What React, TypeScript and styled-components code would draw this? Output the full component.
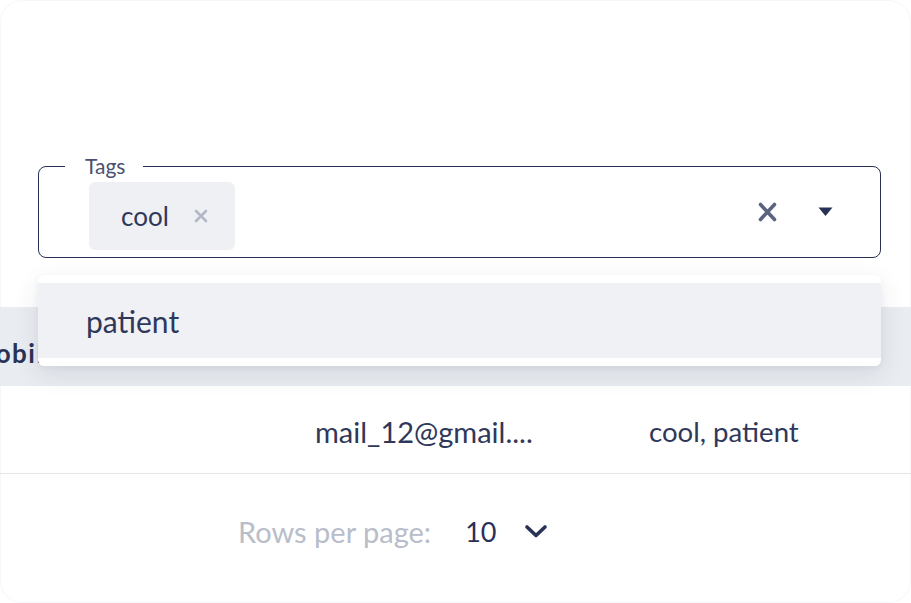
import React from 'react';
import styled, { createGlobalStyle } from 'styled-components';

const GlobalStyle = createGlobalStyle`
  html, body {
    margin: 0;
    padding: 0;
    background: #ffffff;
  }
  body {
    font-family: 'Lato', 'Noto Sans', sans-serif;
    color: #283256;
    -webkit-font-smoothing: antialiased;
  }
`;

const Page = styled.div`
  width: 911px;
  height: 603px;
  overflow: hidden;
  background: #ffffff;
  border-radius: 22px;
  box-shadow: inset 0 0 0 1px #f6f7f9;
  padding-top: 166px;
  box-sizing: border-box;
`;

const FieldWrap = styled.div`
  position: relative;
  margin: 0 30px 0 38px;
  z-index: 2;
`;

const Fieldset = styled.fieldset`
  margin: -11px 0 0;
  height: 103px;
  box-sizing: border-box;
  border: 1.5px solid #283256;
  border-radius: 8px;
  padding: 0 47px 0 50px;
  display: flex;
  align-items: center;
  gap: 14px;
`;

const Legend = styled.legend`
  font-size: 21px;
  color: #4a5170;
  padding: 0 18px 0 20px;
  margin-left: -24px;
  line-height: 22px;
`;

const Chip = styled.div`
  display: flex;
  align-items: center;
  gap: 25px;
  height: 68px;
  margin-top: -3px;
  padding: 0 27px 0 32px;
  background: #eff0f4;
  border-radius: 6px;
  font-size: 26px;
  color: #2f3859;
`;

const Spacer = styled.div`
  flex: 1;
`;

const IconButton = styled.button<{ $w: number; $gap?: number }>`
  display: flex;
  align-items: center;
  justify-content: center;
  border: 0;
  background: none;
  padding: 0;
  width: ${({ $w }) => $w}px;
  height: 30px;
  margin-top: -11px;
  margin-left: ${({ $gap }) => $gap ?? 0}px;
  cursor: pointer;
`;

const Menu = styled.ul`
  position: absolute;
  left: 0;
  right: 0;
  top: calc(100% + 17px);
  list-style: none;
  margin: 0;
  padding: 8px 0;
  background: #ffffff;
  border-radius: 6px;
  box-shadow: 0 8px 26px rgba(40, 50, 86, 0.1), 0 2px 6px rgba(40, 50, 86, 0.05);
`;

const Option = styled.li<{ $active?: boolean }>`
  height: 75px;
  display: flex;
  align-items: center;
  padding-left: 48px;
  font-size: 30px;
  color: #2f3859;
  background: ${({ $active }) => ($active ? '#f0f1f5' : 'transparent')};
`;

const Table = styled.div`
  margin-top: 49px;
`;

const HeaderRow = styled.div`
  height: 79px;
  background: #e9ecf0;
  display: flex;
  align-items: center;
  overflow: hidden;
`;

const HeaderCell = styled.div`
  font-size: 26px;
  font-weight: 700;
  letter-spacing: 1.5px;
  color: #283256;
  margin-left: -30px;
  padding-top: 12px;
`;

const DataRow = styled.div`
  height: 88px;
  display: grid;
  grid-template-columns: 315px 334px 1fr;
  align-items: center;
  border-bottom: 1.5px solid #e2e5ea;
  box-sizing: border-box;
`;

const Cell = styled.div<{ $size: number }>`
  font-size: ${({ $size }) => $size}px;
  color: #2f3859;
  padding-top: 4px;
`;

const Pagination = styled.div`
  height: 114px;
  display: flex;
  align-items: center;
  padding-left: 238px;
`;

const PagerLabel = styled.span`
  font-size: 29px;
  color: #b8bdca;
  margin-right: 34px;
`;

const PagerValue = styled.span`
  font-size: 27px;
  color: #283256;
  margin-right: 28px;
`;

const App: React.FC = () => {
  return (
    <>
      <GlobalStyle />
      <Page>
        <FieldWrap>
          <Fieldset>
            <Legend>Tags</Legend>
            <Chip>
              cool
              <svg width="14" height="14" viewBox="0 0 14 14">
                <path d="M2 2 L12 12 M12 2 L2 12" stroke="#b3b8c5" strokeWidth="2.6" strokeLinecap="round" />
              </svg>
            </Chip>
            <Spacer />
            <IconButton $w={20} aria-label="Clear">
              <svg width="19" height="20" viewBox="0 0 19 20">
                <path d="M2.5 2.5 L16.5 17.5 M16.5 2.5 L2.5 17.5" stroke="#5c6380" strokeWidth="3.6" strokeLinecap="round" />
              </svg>
            </IconButton>
            <IconButton $w={16} $gap={26} aria-label="Open">
              <svg width="15" height="10" viewBox="0 0 15 10">
                <path d="M0.5 0.5 L14.5 0.5 L7.5 9 Z" fill="#283256" />
              </svg>
            </IconButton>
          </Fieldset>
          <Menu>
            <Option $active>patient</Option>
          </Menu>
        </FieldWrap>

        <Table>
          <HeaderRow>
            <HeaderCell>Mobile</HeaderCell>
          </HeaderRow>
          <DataRow>
            <span />
            <Cell $size={29}>mail_12@gmail....</Cell>
            <Cell $size={27.6}>cool, patient</Cell>
          </DataRow>
          <Pagination>
            <PagerLabel>Rows per page:</PagerLabel>
            <PagerValue>10</PagerValue>
            <svg width="24" height="15" viewBox="0 0 24 15">
              <path d="M3 3 L12 11.5 L21 3" stroke="#283256" strokeWidth="3.6" strokeLinecap="round" strokeLinejoin="round" fill="none" />
            </svg>
          </Pagination>
        </Table>
      </Page>
    </>
  );
};

export default App;
